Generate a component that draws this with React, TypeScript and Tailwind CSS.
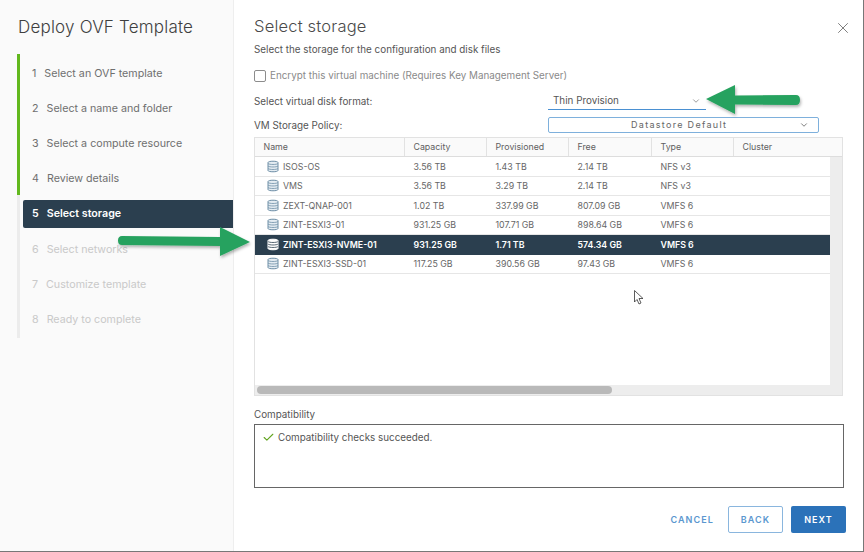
import { X, ChevronDown, Check } from 'lucide-react';

const steps = [
  { n: 1, label: 'Select an OVF template', state: 'done' },
  { n: 2, label: 'Select a name and folder', state: 'done' },
  { n: 3, label: 'Select a compute resource', state: 'done' },
  { n: 4, label: 'Review details', state: 'done' },
  { n: 5, label: 'Select storage', state: 'active' },
  { n: 6, label: 'Select networks', state: 'todo' },
  { n: 7, label: 'Customize template', state: 'todo' },
  { n: 8, label: 'Ready to complete', state: 'todo' },
];

const rows = [
  ['ISOS-OS', '3.56 TB', '1.43 TB', '2.14 TB', 'NFS v3'],
  ['VMS', '3.56 TB', '3.29 TB', '2.14 TB', 'NFS v3'],
  ['ZEXT-QNAP-001', '1.02 TB', '337.99 GB', '807.09 GB', 'VMFS 6'],
  ['ZINT-ESXI3-01', '931.25 GB', '107.71 GB', '898.64 GB', 'VMFS 6'],
  ['ZINT-ESXI3-NVME-01', '931.25 GB', '1.71 TB', '574.34 GB', 'VMFS 6'],
  ['ZINT-ESXI3-SSD-01', '117.25 GB', '390.56 GB', '97.43 GB', 'VMFS 6'],
];

function DbIcon({ selected }: { selected: boolean }) {
  const stroke = selected ? '#2b3f4f' : '#6d8ea6';
  const fill = selected ? '#ffffff' : '#e4ecf2';
  return (
    <svg width="12" height="13" viewBox="0 0 12 13" className="shrink-0">
      <path d="M1 2.500C1 0.800 11 0.800 11 2.500V10.500C11 12.200 1 12.200 1 10.500Z" fill={fill} stroke={selected ? '#ffffff' : stroke} />
      <path d="M1 3.500C2 4.800 10 4.800 11 3.500M1 6C2 7.300 10 7.300 11 6M1 8.500C2 9.800 10 9.800 11 8.500" fill="none" stroke={stroke} strokeWidth="0.8" />
    </svg>
  );
}

function Sidebar() {
  return (
    <aside className="w-[234px] h-full shrink-0 bg-[#fafafa] border-r border-[#eeeeee] pt-[17px]">
      <h1 className="pl-[18px] text-[17px] leading-[20px] text-[#3f3f3f] font-light tracking-[0.2px]">Deploy OVF Template</h1>
      <ol className="mt-[17px] ml-[17px] pt-[2px] border-l-[3px] border-[#ececec] relative">
        <div className="absolute -left-[3px] top-0 w-[3px] h-[141px] bg-[#62b81e]" />
        {steps.map((s) => (
          <li key={s.n} className="h-[35.2px] flex items-center">
            <div
              className={
                s.state === 'active'
                  ? 'ml-[3px] w-[210px] h-[28px] pl-[9px] flex items-center gap-[8px] rounded-l-[2px] bg-[#2b3f4f] text-white font-semibold text-[10.7px]'
                  : s.state === 'done'
                    ? 'pl-[12px] flex items-center gap-[8px] text-[#6f6f6f] text-[10.7px]'
                    : 'pl-[12px] flex items-center gap-[8px] text-[#c9c9c9] text-[10.7px]'
              }
            >
              <span>{s.n}</span>
              <span>{s.label}</span>
            </div>
          </li>
        ))}
      </ol>
    </aside>
  );
}

function Table() {
  const cols = 'grid grid-cols-[150px_82px_82px_83px_82px_1fr]';
  return (
    <div className="mt-[4px] w-[589px] h-[259px] border border-[#e2e2e2] flex flex-col bg-[#ededed] relative">
      <div className={`${cols} h-[19px] bg-[#fafafa] border-b border-[#dddddd] text-[8.800px] text-[#5f5f5f] shrink-0`}>
        {['Name', 'Capacity', 'Provisioned', 'Free', 'Type', 'Cluster'].map((h) => (
          <div key={h} className="pl-[8.500px] flex items-center border-r border-[#e2e2e2] last:border-r-0">{h}</div>
        ))}
      </div>
      <div className="w-[575px] h-[228px] bg-white">
        {rows.map((r) => {
          const selected = r[0] === 'ZINT-ESXI3-NVME-01';
          return (
            <div
              key={r[0]}
              className={
                selected
                  ? `${cols} h-[19.500px] bg-[#2b3f4f] text-white font-semibold text-[8.800px]`
                  : `${cols} h-[19.500px] border-b border-[#e6e6e6] text-[#666666] text-[8.800px]`
              }
            >
              <div className="pl-[12px] flex items-center gap-[4px]">
                <DbIcon selected={selected} />
                <span>{r[0]}</span>
              </div>
              {r.slice(1).map((c, i) => (
                <div key={i} className="pl-[8.500px] flex items-center">{c}</div>
              ))}
            </div>
          );
        })}
      </div>
      <div className="flex-1 flex items-center px-[2px]">
        <div className="w-[355px] h-[8px] rounded-full bg-[#b9b9b9]" />
      </div>
    </div>
  );
}

function Main() {
  return (
    <main className="flex-1 relative pl-[20px] pt-[17px]">
      <h2 className="text-[16.500px] leading-[18px] text-[#4a4a4a] font-light tracking-[0.2px]">Select storage</h2>
      <p className="mt-[8px] text-[9.850px] leading-[13px] text-[#555555]">Select the storage for the configuration and disk files</p>
      <div className="mt-[13px] flex items-center gap-[4px] h-[13px]">
        <div className="w-[12px] h-[12px] rounded-[2px] border border-[#8c8c8c] bg-white" />
        <span className="text-[9.850px] text-[#8a8a8a]">Encrypt this virtual machine (Requires Key Management Server)</span>
      </div>
      <div className="mt-[10px] flex items-center h-[18px]">
        <span className="w-[294px] text-[9.850px] text-[#555555]">Select virtual disk format:</span>
        <div className="w-[158px] h-[18px] border-b border-[#4a90d2] pl-[5px] pr-[5px] flex items-center justify-between text-[9.850px] text-[#555555]">
          <span>Thin Provision</span>
          <ChevronDown size={10} className="text-[#8a8a8a]" />
        </div>
      </div>
      <div className="mt-[7px] flex items-center h-[16px]">
        <span className="w-[294px] text-[9.850px] text-[#555555]">VM Storage Policy:</span>
        <div className="w-[271px] h-[16px] border border-[#7eb0dc] rounded-[2px] pl-[82px] pr-[9px] flex items-center justify-between text-[9px] tracking-[1.300px] text-[#666666]">
          <span>Datastore Default</span>
          <ChevronDown size={10} className="text-[#666666]" />
        </div>
      </div>
      <Table />
      <div className="mt-[12px] text-[9.850px] leading-[13px] text-[#555555]">Compatibility</div>
      <div className="mt-[3px] w-[590px] h-[64px] border border-[#666666] pl-[7px] pt-[5px] flex items-start gap-[3px] text-[9.850px] text-[#555555]">
        <Check size={13} className="text-[#62a420] mt-[1px]" />
        <span>Compatibility checks succeeded.</span>
      </div>
      <div className="mt-[18px] w-[592px] flex items-center justify-end text-[9px] font-semibold tracking-[1.1px]">
        <span className="mr-[14px] text-[#5b97cf]">CANCEL</span>
        <div className="w-[55px] h-[27px] mr-[8px] flex items-center justify-center rounded-[2px] border border-[#8ab6de] text-[#5b97cf]">BACK</div>
        <div className="w-[55px] h-[27px] flex items-center justify-center rounded-[2px] bg-[#2b72b9] text-white">NEXT</div>
      </div>
      <button className="absolute right-[11px] top-[19px] text-[#555555]">
        <X size={18} strokeWidth={1} />
      </button>
    </main>
  );
}

export default function App() {
  return (
    <div className="relative w-[864px] h-[552px] overflow-hidden flex bg-white border-r border-b border-[#777777] font-['Inter','Liberation_Sans',sans-serif]">
      <Sidebar />
      <Main />
      {/* annotation arrows pasted over the screenshot */}
      <svg className="absolute left-0 top-0 pointer-events-none" width="864" height="552">
        <defs>
          <filter id="sh" x="-20%" y="-40%" width="140%" height="180%">
            <feDropShadow dx="1" dy="2" stdDeviation="1.5" floodColor="#000" floodOpacity="0.3" />
          </filter>
        </defs>
        <path d="M122 236L220 237V227L250 242L220 256V246L122 245Q118 245 118 240.500Q118 236 122 236Z" fill="#27a25f" filter="url(#sh)" />
        <path d="M796 95L735 95.500V85L706 99L735 114V104.500L796 105Q800 105 800 100Q800 95 796 95Z" fill="#27a25f" filter="url(#sh)" />
        {/* mouse pointer */}
        <path d="M634.500 290.500V302L637 299.500L639 304L641 303L639 298.500H643Z" fill="#ffffff" stroke="#333333" strokeWidth="0.8" />
      </svg>
    </div>
  );
}
